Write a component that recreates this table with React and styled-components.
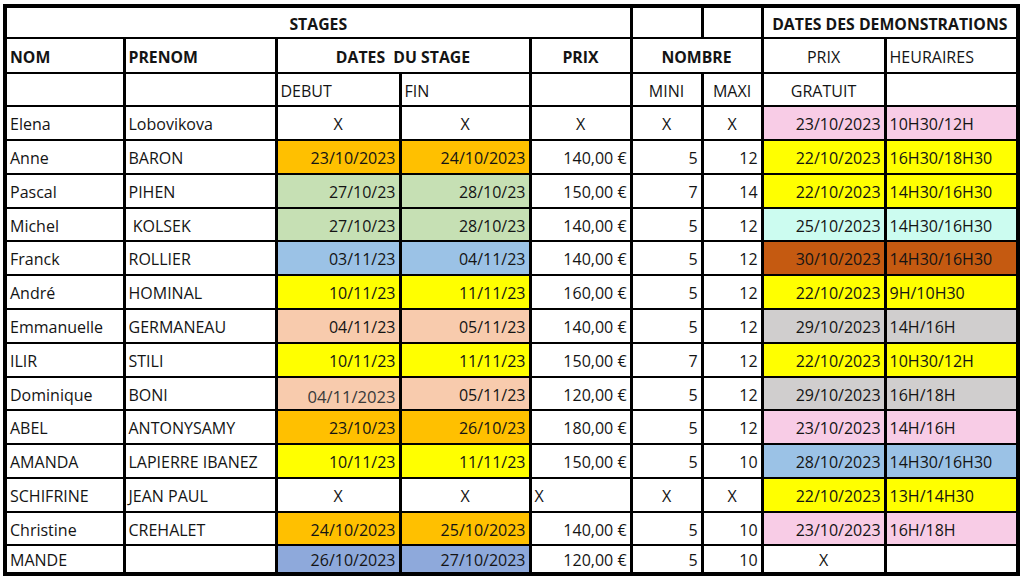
import React from "react";
import styled, { createGlobalStyle } from "styled-components";

const Global = createGlobalStyle`
  html, body { margin: 0; padding: 0; background: #ffffff; }
  body { font-family: "Open Sans", "Liberation Sans", sans-serif; color: #141414; }
`;

const Page = styled.div`
  padding: 4px 0 0 3px;
  width: 1024px;
  height: 577px;
  box-sizing: border-box;
  overflow: hidden;
`;

const Sheet = styled.table`
  border-collapse: collapse;
  table-layout: fixed;
  width: 1013px;
  border: 4px solid #000;
  font-size: 16px;
`;

const Row = styled.tr`
  height: ${(p) => p.$h}px;
`;

const Cell = styled.td`
  border-left: 3px solid #000;
  border-right: 3px solid #000;
  border-top: 2px solid #000;
  border-bottom: 2px solid #000;
  padding: 2px 3px 0 3px;
  background: ${(p) => p.$bg || "#ffffff"};
  text-align: ${(p) => p.$align || "left"};
  font-weight: ${(p) => (p.$bold ? 700 : 400)};
  font-size: ${(p) => (p.$bold ? "15.8px" : p.$faded ? "16.6px" : "16px")};
  color: ${(p) => (p.$faded ? "#3a3a3a" : "#141414")};
  padding-top: ${(p) => (p.$faded ? "7px" : "2px")};
  white-space: pre;
  overflow: hidden;
  vertical-align: middle;
  line-height: 20px;
`;

const COLS = [119, 152, 124, 130, 101, 71, 60, 123, 133];

const C = {
  orange: "#ffc000",
  green: "#c6e0b4",
  blue: "#9bc2e6",
  yellow: "#ffff00",
  peach: "#f8cbad",
  pink: "#f8cce6",
  cyan: "#ccfcf0",
  brown: "#c55a11",
  grey: "#d0cece",
  blue2: "#8ea9db",
};

const DEFAULT_ALIGN = ["left", "left", "right", "right", "right", "right", "right", "right", "left"];

const rows = [
  ["Elena", "Lobovikova", "X", "X", "X", "X", "X", ["23/10/2023", C.pink], ["10H30/12H", C.pink]],
  ["Anne", "BARON", ["23/10/2023", C.orange], ["24/10/2023", C.orange], "140,00 €", "5", "12", ["22/10/2023", C.yellow], ["16H30/18H30", C.yellow]],
  ["Pascal", "PIHEN", ["27/10/23", C.green], ["28/10/23", C.green], "150,00 €", "7", "14", ["22/10/2023", C.yellow], ["14H30/16H30", C.yellow]],
  ["Michel", " KOLSEK", ["27/10/23", C.green], ["28/10/23", C.green], "140,00 €", "5", "12", ["25/10/2023", C.cyan], ["14H30/16H30", C.cyan]],
  ["Franck", "ROLLIER", ["03/11/23", C.blue], ["04/11/23", C.blue], "140,00 €", "5", "12", ["30/10/2023", C.brown], ["14H30/16H30", C.brown]],
  ["André", "HOMINAL", ["10/11/23", C.yellow], ["11/11/23", C.yellow], "160,00 €", "5", "12", ["22/10/2023", C.yellow], ["9H/10H30", C.yellow]],
  ["Emmanuelle", "GERMANEAU", ["04/11/23", C.peach], ["05/11/23", C.peach], "140,00 €", "5", "12", ["29/10/2023", C.grey], ["14H/16H", C.grey]],
  ["ILIR", "STILI", ["10/11/23", C.yellow], ["11/11/23", C.yellow], "150,00 €", "7", "12", ["22/10/2023", C.yellow], ["10H30/12H", C.yellow]],
  ["Dominique", "BONI", ["04/11/2023", C.peach, "faded"], ["05/11/23", C.peach], "120,00 €", "5", "12", ["29/10/2023", C.grey], ["16H/18H", C.grey]],
  ["ABEL", "ANTONYSAMY", ["23/10/23", C.orange], ["26/10/23", C.orange], "180,00 €", "5", "12", ["23/10/2023", C.pink], ["14H/16H", C.pink]],
  ["AMANDA", "LAPIERRE IBANEZ", ["10/11/23", C.yellow], ["11/11/23", C.yellow], "150,00 €", "5", "10", ["28/10/2023", C.blue], ["14H30/16H30", C.blue]],
  ["SCHIFRINE", "JEAN PAUL", "X", "X", ["X", null, "left"], "X", "X", ["22/10/2023", C.yellow], ["13H/14H30", C.yellow]],
  ["Christine", "CREHALET", ["24/10/2023", C.orange], ["25/10/2023", C.orange], "140,00 €", "5", "10", ["23/10/2023", C.pink], ["16H/18H", C.pink]],
  ["MANDE", "", ["26/10/2023", C.blue2], ["27/10/2023", C.blue2], "120,00 €", "5", "10", "X", ""],
];

const HEIGHTS = [34, 34, 34, 33, 34, 34, 34, 34, 33, 34, 34, 34, 33, 29];

function DataCell({ spec, col }) {
  let text = spec;
  let bg;
  let extra;
  if (Array.isArray(spec)) {
    [text, bg, extra] = spec;
  }
  let align = DEFAULT_ALIGN[col];
  if (text === "X") align = "center";
  if (extra === "left") align = "left";
  return (
    <Cell $bg={bg} $align={align} $faded={extra === "faded"}>
      {text}
    </Cell>
  );
}

export default function App() {
  return (
    <Page>
      <Global />
      <Sheet>
        <colgroup>
          {COLS.map((w, i) => (
            <col key={i} style={{ width: w }} />
          ))}
        </colgroup>
        <tbody>
          <Row $h={32}>
            <Cell colSpan={5} $align="center" $bold>STAGES</Cell>
            <Cell />
            <Cell />
            <Cell colSpan={2} $align="center" $bold>DATES DES DEMONSTRATIONS</Cell>
          </Row>
          <Row $h={35}>
            <Cell $bold>NOM</Cell>
            <Cell $bold>PRENOM</Cell>
            <Cell colSpan={2} $align="center" $bold>{"DATES  DU STAGE"}</Cell>
            <Cell $align="center" $bold>PRIX</Cell>
            <Cell colSpan={2} $align="center" $bold>NOMBRE</Cell>
            <Cell $align="center">PRIX</Cell>
            <Cell>HEURAIRES</Cell>
          </Row>
          <Row $h={33}>
            <Cell />
            <Cell />
            <Cell>DEBUT</Cell>
            <Cell>FIN</Cell>
            <Cell />
            <Cell $align="center">MINI</Cell>
            <Cell $align="center">MAXI</Cell>
            <Cell $align="center">GRATUIT</Cell>
            <Cell />
          </Row>
          {rows.map((r, i) => (
            <Row key={i} $h={HEIGHTS[i]}>
              {r.map((c, j) => (
                <DataCell key={j} spec={c} col={j} />
              ))}
            </Row>
          ))}
        </tbody>
      </Sheet>
    </Page>
  );
}
